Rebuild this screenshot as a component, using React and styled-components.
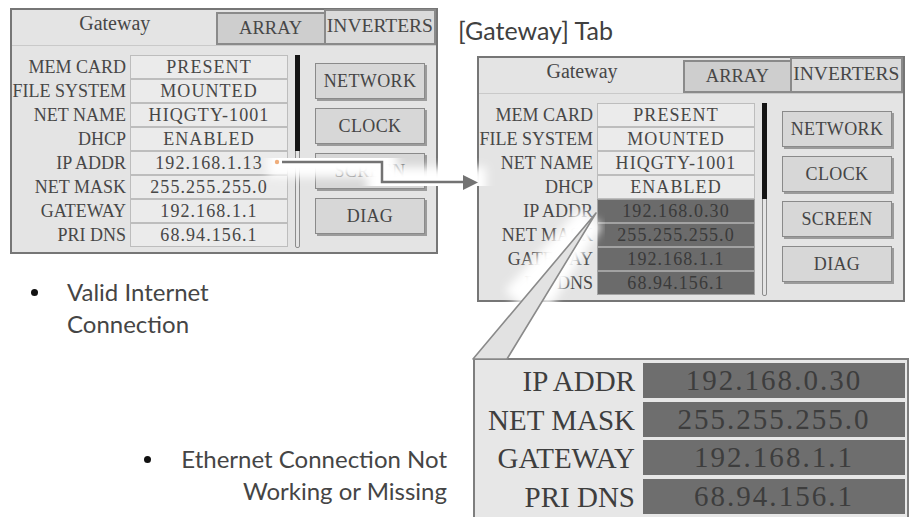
import React from "react";
import styled, { createGlobalStyle } from "styled-components";

const GlobalStyle = createGlobalStyle`
  html, body {
    margin: 0;
    padding: 0;
    background: #ffffff;
  }
  body {
    width: 909px;
    height: 517px;
    overflow: hidden;
  }
`;

const Page = styled.div`
  position: relative;
  width: 909px;
  height: 517px;
  overflow: hidden;
  display: grid;
  grid-template-columns: 440px 469px;
  background: #ffffff;
`;

const LeftColumn = styled.div`
  display: flex;
  flex-direction: column;
  padding: 8px 0 0 10px;
`;

const RightColumn = styled.div`
  display: flex;
  flex-direction: column;
  padding-top: 15px;
`;

const Caption = styled.div`
  margin-left: 18px;
  font-family: "Lato", "Open Sans", sans-serif;
  font-size: 25px;
  line-height: 30px;
  color: #404040;
`;

const BulletItem = styled.div`
  display: flex;
  align-items: flex-start;
  margin-top: ${(props) => props.$top}px;
  margin-left: ${(props) => props.$left}px;
  width: ${(props) => (props.$width ? `${props.$width}px` : "auto")};
  font-family: "Lato", "Open Sans", sans-serif;
  font-size: 24px;
  line-height: 32px;
  color: #454545;
`;

const Dot = styled.span`
  flex: none;
  width: 7px;
  height: 7px;
  margin-top: 13px;
  margin-right: ${(props) => props.$gap}px;
  border-radius: 50%;
  background: #111111;
`;

const BulletText = styled.div`
  flex: 1;
  text-align: ${(props) => props.$align || "left"};
`;

/* ---------- LCD screen ---------- */

const Screen = styled.div`
  box-sizing: border-box;
  width: 428px;
  height: 246px;
  margin-top: ${(props) => props.$top || 0}px;
  margin-left: ${(props) => props.$left || 0}px;
  border: 2px solid #767676;
  background: #e4e4e4;
  display: flex;
  flex-direction: column;
  font-family: "Liberation Serif", "Times New Roman", serif;
  font-size: 18px;
  color: #474747;
`;

const TabBar = styled.div`
  display: flex;
  height: 35px;
  border-bottom: 1px solid #c9c9c9;
`;

const Tab = styled.div`
  box-sizing: border-box;
  width: ${(props) => props.$width}px;
  margin-top: ${(props) => props.$top || 0}px;
  padding-top: ${(props) => props.$pad}px;
  text-align: center;
  font-size: ${(props) => props.$size}px;
  line-height: 22px;
  white-space: nowrap;
  background: ${(props) => props.$bg};
  border: ${(props) => (props.$framed ? "2px solid #8a8a8a" : "none")};
  ${(props) => props.$framed && "margin-left: -2px;"}
`;

const ScreenBody = styled.div`
  display: flex;
  align-items: flex-start;
  padding-top: 9px;
`;

const InfoTable = styled.div`
  display: grid;
  grid-template-columns: 114px 158px;
  grid-auto-rows: 24px;
  column-gap: 4px;
`;

const Label = styled.div`
  text-align: right;
  line-height: 24px;
  white-space: nowrap;
`;

const Value = styled.div`
  box-sizing: border-box;
  text-align: center;
  line-height: 22px;
  letter-spacing: 0.06em;
  white-space: nowrap;
  border: 1px solid ${(props) => (props.$dark ? "#a2a2a2" : "#bdbdbd")};
  background: ${(props) => (props.$dark ? "#6b6b6b" : "#ebebeb")};
  color: ${(props) => (props.$dark ? "#3a3a3a" : "#474747")};
`;

const ScrollTrack = styled.div`
  box-sizing: border-box;
  width: 5px;
  height: 193px;
  margin-left: 7px;
  border: 1px solid #8c8c8c;
  border-radius: 2px;
`;

const ScrollThumb = styled.div`
  margin: -1px;
  height: 96px;
  background: #141414;
`;

const ButtonColumn = styled.div`
  display: flex;
  flex-direction: column;
  gap: 9px;
  margin-left: 15px;
  padding-top: 8px;
`;

const ScreenButton = styled.div`
  box-sizing: border-box;
  width: 110px;
  height: 36px;
  display: flex;
  align-items: center;
  justify-content: center;
  border: 1px solid #8a8a8a;
  box-shadow: 2px 2px 0 #9b9b9b;
  background: #d7d7d7;
  color: #454545;
  letter-spacing: 0.02em;
`;

/* ---------- magnified view ---------- */

const ZoomPanel = styled.div`
  box-sizing: border-box;
  width: 436px;
  height: 170px;
  margin-top: 56px;
  margin-left: 33px;
  padding: 3px 2px 0 0;
  border: 2px solid #7e7e7e;
  background: #e7e7e7;
  font-family: "Liberation Serif", "Times New Roman", serif;
  font-size: 29px;
  color: #3e3e3e;
`;

const ZoomTable = styled.div`
  display: grid;
  grid-template-columns: 160px 262px;
  grid-auto-rows: 35px;
  column-gap: 8px;
  row-gap: 3.5px;
`;

const ZoomLabel = styled.div`
  text-align: right;
  line-height: 37px;
  white-space: nowrap;
`;

const ZoomValue = styled.div`
  text-align: center;
  line-height: 35px;
  letter-spacing: 0.07em;
  background: #6e6e6e;
  color: #3d3d3d;
`;

const Overlay = styled.svg`
  position: absolute;
  left: 0;
  top: 0;
  width: 909px;
  height: 517px;
  pointer-events: none;
`;

const rowsOk = [
  ["MEM CARD", "PRESENT"],
  ["FILE SYSTEM", "MOUNTED"],
  ["NET NAME", "HIQGTY-1001"],
  ["DHCP", "ENABLED"],
  ["IP ADDR", "192.168.1.13"],
  ["NET MASK", "255.255.255.0"],
  ["GATEWAY", "192.168.1.1"],
  ["PRI DNS", "68.94.156.1"],
];

const rowsBad = [
  ["MEM CARD", "PRESENT"],
  ["FILE SYSTEM", "MOUNTED"],
  ["NET NAME", "HIQGTY-1001"],
  ["DHCP", "ENABLED"],
  ["IP ADDR", "192.168.0.30"],
  ["NET MASK", "255.255.255.0"],
  ["GATEWAY", "192.168.1.1"],
  ["PRI DNS", "68.94.156.1"],
];

const buttons = ["NETWORK", "CLOCK", "SCREEN", "DIAG"];

function GatewayScreen({ rows, darkFrom, top, left, tabs }) {
  return (
    <Screen $top={top} $left={left}>
      <TabBar>
        <Tab $width={tabs[0]} $pad={2} $size={20} $bg="#e4e4e4">
          Gateway
        </Tab>
        <Tab $width={tabs[1]} $top={2} $pad={3} $size={18.5} $bg="#cecece" $framed>
          ARRAY
        </Tab>
        <Tab $width={tabs[2]} $top={-1} $pad={4} $size={19.5} $bg="#dadada" $framed>
          INVERTERS
        </Tab>
      </TabBar>
      <ScreenBody>
        <InfoTable>
          {rows.map(([label, value], i) => (
            <React.Fragment key={label}>
              <Label>{label}</Label>
              <Value $dark={darkFrom !== undefined && i >= darkFrom}>{value}</Value>
            </React.Fragment>
          ))}
        </InfoTable>
        <ScrollTrack>
          <ScrollThumb />
        </ScrollTrack>
        <ButtonColumn>
          {buttons.map((b) => (
            <ScreenButton key={b}>{b}</ScreenButton>
          ))}
        </ButtonColumn>
      </ScreenBody>
    </Screen>
  );
}

function Callouts() {
  return (
    <Overlay viewBox="0 0 909 517">
      <defs>
        <filter id="halo" x="-20%" y="-20%" width="140%" height="140%">
          <feGaussianBlur stdDeviation="5" />
        </filter>
      </defs>
      {/* white glow behind the connector */}
      <path
        d="M 268 162 H 382 V 182 H 486"
        fill="none"
        stroke="#ffffff"
        strokeWidth="30"
        filter="url(#halo)"
      />
      <path
        d="M 590 218 L 515 300 M 590 218 L 538 300"
        fill="none"
        stroke="#ffffff"
        strokeWidth="28"
        filter="url(#halo)"
      />
      <circle cx="277" cy="162" r="2.2" fill="#efae7c" />
      <path
        d="M 282 162 H 382 V 182 H 466"
        fill="none"
        stroke="#737373"
        strokeWidth="2.5"
      />
      <polygon points="463,175 478,182.5 463,190" fill="#737373" />
      {/* wedge pointing into the magnified rows */}
      <polygon
        points="596,213 473,359 507,359"
        fill="#e2e2e2"
        stroke="#8a8a8a"
        strokeWidth="1.6"
        strokeLinejoin="round"
      />
    </Overlay>
  );
}

export default function App() {
  return (
    <>
      <GlobalStyle />
      <Page>
        <LeftColumn>
          <GatewayScreen rows={rowsOk} tabs={[207, 111, 113]} />
          <BulletItem $top={22} $left={21}>
            <Dot $gap={29} />
            <BulletText>
              Valid Internet
              <br />
              Connection
            </BulletText>
          </BulletItem>
          <BulletItem $top={103} $left={134} $width={303}>
            <Dot $gap={20} />
            <BulletText $align="right">
              Ethernet Connection Not
              <br />
              Working or Missing
            </BulletText>
          </BulletItem>
        </LeftColumn>
        <RightColumn>
          <Caption>[Gateway] Tab</Caption>
          <GatewayScreen
            rows={rowsBad}
            darkFrom={4}
            top={11}
            left={37}
            tabs={[209, 110, 115]}
          />
          <ZoomPanel>
            <ZoomTable>
              {rowsBad.slice(4).map(([label, value]) => (
                <React.Fragment key={label}>
                  <ZoomLabel>{label}</ZoomLabel>
                  <ZoomValue>{value}</ZoomValue>
                </React.Fragment>
              ))}
            </ZoomTable>
          </ZoomPanel>
        </RightColumn>
        <Callouts />
      </Page>
    </>
  );
}
